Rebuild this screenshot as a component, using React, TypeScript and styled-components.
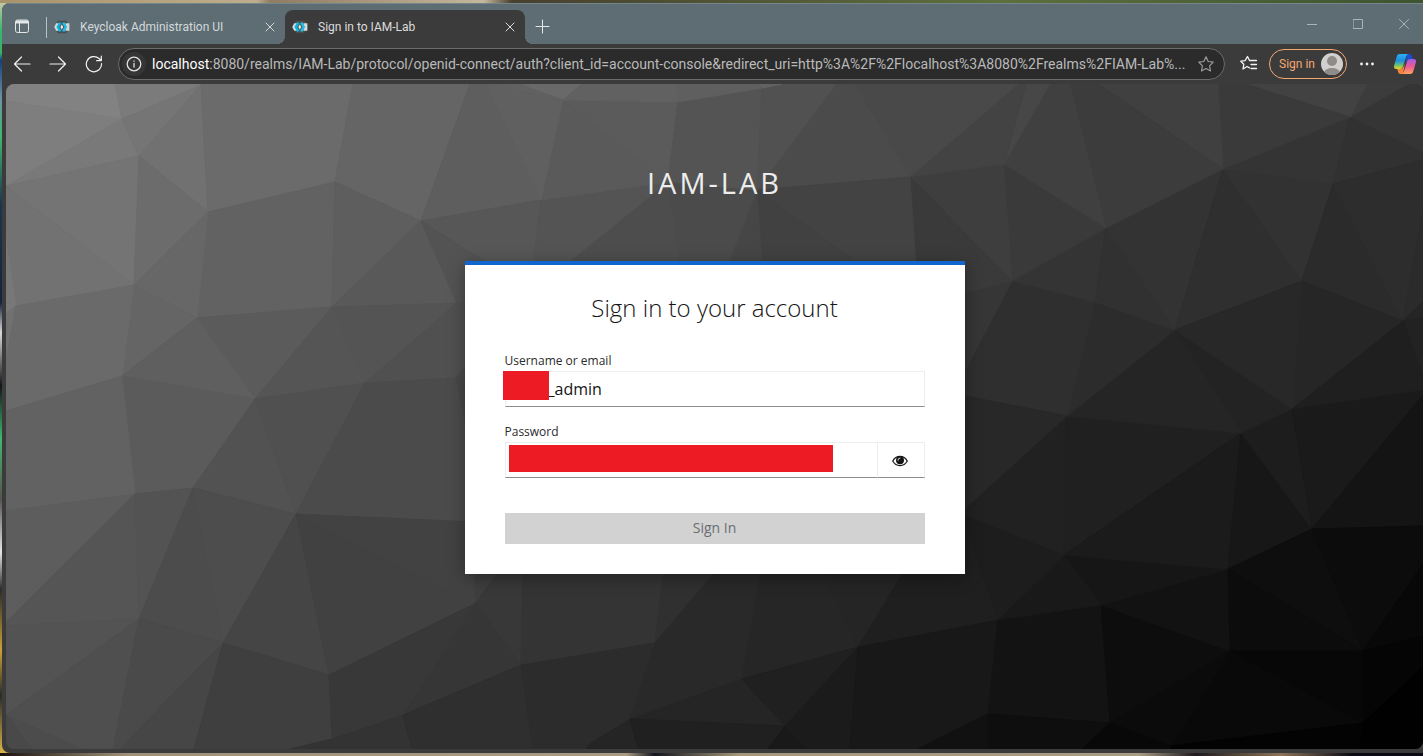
import React from "react";
import styled, { createGlobalStyle, css } from "styled-components";

const uiFont = 'Roboto, "Noto Sans", sans-serif';
const pageFont = '"Open Sans", "Noto Sans", sans-serif';

const GlobalStyle = createGlobalStyle`
  *, *::before, *::after { box-sizing: border-box; }
  html, body, #root { height: 100%; }
  body { margin: 0; overflow: hidden; }
  button { border: 0; padding: 0; background: none; color: inherit; font: inherit; }
`;

const Desktop = styled.div`
  display: flex;
  height: 100%;
  padding: 3px 0 3px 2px;
  background:
    linear-gradient(90deg, #a8926a 0, #bfae8c 18%, #8f7c62 19%, #c5b79b 34%, #47402f 36%, #5d6f3c 70%, #3d5430 100%) top / 100% 3px no-repeat,
    linear-gradient(90deg, #1c120f 0, #a09279 9%, #a89a83 44%, #14161f 46%, #a6977b 52%, #a99c85 80%, #1f1a1f 84%, #8b7358 90%, #0b0a14 95%) bottom / 100% 3px no-repeat,
    linear-gradient(180deg, #d6c8a8 0, #35b86c 4%, #3db167 7%, #14417e 8%, #6b93a6 13%, #3fb86c 18%, #1c3550 27%, #16243d 40%, #d8d8d8 44%, #15151c 51%, #3fb86c 58%, #59534f 66%, #e5e5e5 73%, #2d2c28 78%, #caa233 86%, #2a2a2a 92%, #e3bb47 100%);
`;

const Window = styled.div`
  display: flex;
  flex: 1;
  flex-direction: column;
  min-width: 0;
  overflow: hidden;
  border-radius: 8px 0 0 8px;
  background: #3b3b3b;
  font-family: ${uiFont};
`;

const TabStrip = styled.div`
  display: flex;
  align-items: flex-end;
  height: 41px;
  flex: none;
  border-top: 1px solid #74868c;
  background: #5d6d73;
`;

const StripButton = styled.button<{ $width: number }>`
  display: flex;
  align-items: center;
  justify-content: center;
  width: ${(p) => p.$width}px;
  height: 34px;
  padding-bottom: 2px;
  color: #e4e8e9;
`;

const Divider = styled.span`
  width: 1px;
  height: 21px;
  margin: 0 0 6px 4px;
  background: #b9c1c4;
`;

const Tab = styled.div<{ $active?: boolean }>`
  position: relative;
  display: flex;
  align-items: center;
  gap: 10px;
  width: ${(p) => (p.$active ? 240 : 238)}px;
  height: 34px;
  padding: 0 5px 1px 7px;
  font-size: 12px;
  line-height: 16px;
  color: ${(p) => (p.$active ? "#dcdcdc" : "#d3d9db")};
  ${(p) =>
    p.$active &&
    css`
      border-radius: 8px 8px 0 0;
      background: #3b3b3b;
      &::before,
      &::after {
        content: "";
        position: absolute;
        bottom: 0;
        width: 8px;
        height: 8px;
      }
      &::before {
        left: -8px;
        background: radial-gradient(circle at 0 0, transparent 8px, #3b3b3b 8px);
      }
      &::after {
        right: -8px;
        background: radial-gradient(circle at 100% 0, transparent 8px, #3b3b3b 8px);
      }
    `}
`;

const TabTitle = styled.span`
  flex: 1;
  white-space: nowrap;
`;

const TabClose = styled.button`
  display: flex;
  align-items: center;
  justify-content: center;
  width: 20px;
  height: 20px;
`;

const WindowControls = styled.div`
  display: flex;
  align-self: flex-start;
  margin: 0 -4px 0 auto;
`;

const WindowButton = styled.button`
  display: flex;
  align-items: center;
  justify-content: center;
  width: 46px;
  height: 40px;
  color: #aab4b7;
`;

const Toolbar = styled.div`
  display: flex;
  align-items: center;
  flex: none;
  height: 40px;
  padding-left: 2px;
`;

const ToolButton = styled.button`
  display: flex;
  align-items: center;
  justify-content: center;
  flex: none;
  width: 36px;
  height: 32px;
  color: #f2f2f2;
`;

const SidebarButton = styled(ToolButton)`
  margin-left: 2px;
`;

const AddressBar = styled.div`
  display: flex;
  align-items: center;
  flex: 1;
  min-width: 0;
  height: 32px;
  margin: 0 6px;
  padding: 0 6px 0 3px;
  border: 1px solid #6c6c6c;
  border-radius: 16px;
  background: #2b2b2b;
`;

const SiteInfo = styled.button`
  display: flex;
  align-items: center;
  justify-content: center;
  width: 24px;
  height: 24px;
  border-radius: 12px;
  background: #363636;
  color: #e2e2e2;
`;

const Url = styled.a`
  flex: 1;
  min-width: 0;
  margin: 0 6px;
  overflow: hidden;
  font-size: 14px;
  line-height: 20px;
  white-space: nowrap;
  text-decoration: none;
  color: #b9b9b9;
`;

const UrlHost = styled.span`
  color: #fff;
`;

const StarButton = styled.button`
  display: flex;
  align-items: center;
  justify-content: center;
  width: 24px;
  height: 24px;
  color: #9b9b9b;
`;

const ProfileButton = styled.button`
  display: flex;
  align-items: center;
  justify-content: space-between;
  flex: none;
  width: 78px;
  height: 30px;
  margin: 0 2px;
  padding: 0 3px 0 9px;
  border: 1px solid #f6a770;
  border-radius: 15px;
  font-size: 12px;
  line-height: 16px;
  color: #f6a770;
`;

const Page = styled.main`
  position: relative;
  display: flex;
  flex: 1;
  flex-direction: column;
  align-items: center;
  min-height: 0;
  margin: 0 0 4px 4px;
  padding: 81px 20px 0;
  overflow: hidden;
  border-radius: 8px;
  background: #333;
  font-family: ${pageFont};
`;

const Backdrop = styled.svg`
  position: absolute;
  inset: 0;
  width: 100%;
  height: 100%;
`;

const RealmName = styled.div`
  position: relative;
  margin-bottom: 61px;
  font-size: 29px;
  line-height: 35px;
  letter-spacing: 3px;
  text-transform: uppercase;
  color: #ededed;
`;

const Card = styled.section`
  position: relative;
  width: 100%;
  max-width: 500px;
  padding: 27px 40px 30px;
  border-top: 4px solid #1066cc;
  background: #fff;
  box-shadow: 0 4px 16px rgba(0, 0, 0, 0.35);
`;

const Heading = styled.h1`
  margin: 0 0 28px;
  font-size: 24px;
  font-weight: 300;
  line-height: 32px;
  text-align: center;
  color: #151515;
`;

const Field = styled.div<{ $gap: number }>`
  position: relative;
  margin-bottom: ${(p) => p.$gap}px;
`;

const Label = styled.label`
  display: block;
  margin-bottom: 1px;
  font-size: 12px;
  line-height: 18px;
  color: #2b2b2b;
`;

const InputRow = styled.div`
  display: flex;
`;

const Input = styled.input<{ $indent: number }>`
  flex: 1;
  min-width: 0;
  height: 36px;
  padding: 0 8px 0 ${(p) => p.$indent}px;
  border: 1px solid #ededed;
  border-bottom-color: #8a8d90;
  border-radius: 0;
  outline: 0;
  background: #fff;
  font-family: ${pageFont};
  font-size: 16px;
  color: #151515;
`;

const RevealButton = styled.button`
  display: flex;
  align-items: center;
  justify-content: center;
  width: 47px;
  height: 36px;
  padding: 2px 1px 0 0;
  border: solid #ededed;
  border-width: 1px 1px 1px 0;
  border-bottom-color: #8a8d90;
  color: #151515;
`;

const Redaction = styled.span<{ $x: number; $y: number; $w: number; $h: number }>`
  position: absolute;
  left: ${(p) => p.$x}px;
  top: ${(p) => p.$y}px;
  width: ${(p) => p.$w}px;
  height: ${(p) => p.$h}px;
  background: #ed1c24;
`;

const SubmitButton = styled.button`
  display: block;
  width: 100%;
  height: 31px;
  padding-bottom: 2px;
  background: #d2d2d2;
  font-size: 14px;
  line-height: 20px;
  color: #6a6e73;
`;

type Facet = [points: string, grey: number];

const facets: Facet[] = [
  ["6,84 115,84 122,119 6,101", 130],
  ["115,84 201,84 201,85 122,119", 123],
  ["6,101 122,119 6,186", 126],
  ["122,119 6,186 139,156", 121],
  ["122,119 139,156 201,85", 117],
  ["139,156 201,85 208,212", 113],
  ["6,186 139,156 134,285", 116],
  ["6,186 134,285 16,306 6,240", 114],
  ["6,240 16,306 6,314", 120],
  ["6,314 16,306 6,360", 113],
  ["139,156 208,212 134,285", 108],
  ["201,84 353,84 335,182 208,212", 107],
  ["353,84 470,84 421,221 335,182", 101],
  ["208,212 335,182 332,307 197,318", 98],
  ["208,212 134,285 197,318", 103],
  ["134,285 197,318 122,376", 101],
  ["16,306 134,285 122,376 6,411 6,360", 106],
  ["335,182 421,221 332,307", 94],
  ["421,221 457,303 332,307", 89],
  ["197,318 332,307 255,399", 91],
  ["197,318 122,376 255,399", 95],
  ["332,307 457,303 365,383", 84],
  ["332,307 255,399 365,383", 85],
  ["457,303 365,383 455,378 475,360 475,300", 80],
  ["455,378 475,358 475,386", 74],
  ["455,378 475,386 475,470", 72],
  ["122,376 255,399 193,488 135,494", 91],
  ["122,376 135,494 6,511 6,411", 98],
  ["255,399 193,488 296,514", 82],
  ["255,399 365,383 296,514", 80],
  ["365,383 455,378 475,470 475,522 296,514", 75],
  ["470,84 486,84 541,200 421,221", 94],
  ["421,221 541,200 533,265 490,265", 87],
  ["421,221 490,265 475,300 457,303", 83],
  ["135,494 6,511 6,622", 93],
  ["135,494 139,619 6,626 6,622", 85],
  ["135,494 193,488 139,619", 83],
  ["193,488 139,619 223,643", 76],
  ["193,488 296,514 223,643", 77],
  ["296,514 223,643 329,675", 69],
  ["296,514 329,675 476,603", 65],
  ["296,514 476,603 475,522", 66],
  ["139,619 6,626 6,715", 83],
  ["6,715 139,619 113,749 82,749", 79],
  ["6,715 82,749 32,749", 76],
  ["6,715 32,749 6,749", 73],
  ["139,619 223,643 120,749 113,749", 74],
  ["223,643 194,749 120,749", 70],
  ["223,643 329,675 332,739 290,749 194,749", 63],
  ["329,675 332,739 403,715 476,603", 56],
  ["476,603 403,715 521,665", 54],
  ["332,739 403,715 412,749 290,749", 51],
  ["403,715 521,665 533,749 412,749", 47],
  ["475,560 475,603 497,574 507,560", 62],
  ["476,603 507,560 523,560 521,665", 56],
  ["521,665 523,560 665,560 655,643", 52],
  ["655,643 665,560 725,560", 48],
  ["655,643 725,560 763,560 742,679", 41],
  ["742,679 763,560 815,560 858,647", 38],
  ["858,647 815,560 911,560", 37],
  ["858,647 911,560 960,510 998,620", 31],
  ["521,665 655,643 630,719 588,745 587,749 533,749", 44],
  ["630,719 588,745 587,749 638,749", 37],
  ["655,643 630,719 742,679", 41],
  ["630,719 742,679 785,726", 37],
  ["630,719 785,726 768,749 638,749", 32],
  ["742,679 858,647 785,726", 32],
  ["785,726 858,647 850,749 808,749", 27],
  ["785,726 768,749 808,749", 25],
  ["858,647 998,620 988,714 918,749 850,749", 24],
  ["998,620 988,714 1110,723 1101,605", 19],
  ["988,714 1110,723 1082,749 988,749", 14],
  ["988,714 988,749 918,749", 17],
  ["1101,605 1110,723 1230,651", 13],
  ["1101,605 1230,651 1228,569", 18],
  ["1064,555 1101,605 1228,569", 22],
  ["1064,555 998,620 1101,605", 25],
  ["998,620 1064,555 960,513 960,510", 29],
  ["960,513 1067,416 1064,555", 33],
  ["1067,416 1064,555 1241,433", 32],
  ["1064,555 1241,433 1228,569", 27],
  ["1241,433 1228,569 1312,529", 23],
  ["1241,433 1292,409 1312,529", 29],
  ["1175,330 1292,409 1241,433", 35],
  ["1175,330 1067,416 1241,433", 37],
  ["1292,409 1312,529 1423,395 1423,390", 26],
  ["1312,529 1423,395 1423,526", 20],
  ["1228,569 1312,529 1363,651", 14],
  ["1228,569 1230,651 1363,651", 12],
  ["1312,529 1363,651 1423,564 1423,526", 12],
  ["1363,651 1423,564 1423,636", 8],
  ["1363,651 1363,723 1423,667 1423,636", 5],
  ["1363,723 1423,667 1423,749 1360,749", 1],
  ["1230,651 1363,651 1363,723", 7],
  ["1230,651 1363,723 1171,746", 9],
  ["1230,651 1171,746 1110,723", 11],
  ["1110,723 1171,746 1170,749 1082,749", 8],
  ["1171,746 1363,723 1360,749 1170,749", 3],
  ["1175,330 1095,302 1067,416", 44],
  ["1012,281 1095,302 1067,416 960,395 960,380", 47],
  ["960,395 1067,416 960,513", 40],
  ["1012,281 960,294 960,380", 54],
  ["1012,281 1095,302 1106,228", 52],
  ["1004,164 1106,228 1012,281", 58],
  ["910,177 1004,164 1012,281", 62],
  ["910,177 1012,281 960,294 916,265", 58],
  ["1106,228 1095,302 1175,330", 49],
  ["1106,228 1223,169 1175,330", 51],
  ["1223,169 1175,330 1302,281", 47],
  ["1223,169 1333,184 1302,281", 50],
  ["1223,169 1350,117 1333,184", 52],
  ["1333,184 1350,117 1423,152 1423,160", 49],
  ["1350,117 1408,84 1423,84 1423,152", 53],
  ["1350,117 1367,84 1408,84", 60],
  ["1350,117 1245,84 1367,84", 66],
  ["1223,169 1350,117 1245,84 1218,84", 58],
  ["1223,169 1098,84 1218,84", 64],
  ["1106,228 1223,169 1098,84 1070,84", 60],
  ["1004,164 1106,228 1070,84 1050,84", 64],
  ["1004,164 1026,84 1050,84", 71],
  ["1004,164 1026,84 1018,84 910,177", 67],
  ["910,177 855,84 1018,84", 73],
  ["1333,184 1302,281 1403,321", 43],
  ["1333,184 1403,321 1423,212 1423,160", 45],
  ["1403,321 1423,212 1423,302", 43],
  ["1403,321 1423,302 1423,318", 37],
  ["1403,321 1423,318 1423,377", 34],
  ["1302,281 1403,321 1292,409", 38],
  ["1302,281 1175,330 1292,409", 40],
  ["1403,321 1292,409 1423,390 1423,377", 31],
  ["757,190 910,177 855,84 836,84", 75],
  ["757,190 910,177 916,265 860,265", 67],
  ["757,190 860,265 762,265", 65],
  ["757,190 762,265 728,265", 70],
  ["668,182 757,190 728,265 680,265", 75],
  ["668,182 680,265 565,265", 77],
  ["668,182 541,200 533,265 565,265", 84],
  ["668,182 563,100 541,200", 90],
  ["668,182 678,102 563,100", 91],
  ["678,102 762,88 757,190 668,182", 84],
  ["762,88 757,190 836,84 782,84", 81],
  ["762,88 757,84 782,84", 98],
  ["563,100 519,84 582,84", 105],
  ["563,100 582,84 677,84 678,102", 97],
  ["678,102 677,84 757,84 762,88", 95],
  ["563,100 486,84 519,84", 97],
  ["563,100 486,84 541,200", 96],
];

const LowPolyBackdrop = () => (
  <Backdrop viewBox="6 84 1417 665" preserveAspectRatio="none" aria-hidden="true">
    {facets.map(([points, grey], i) => {
      const fill = `rgb(${grey},${grey},${grey})`;
      return <polygon key={i} points={points} fill={fill} stroke={fill} strokeWidth="1" strokeLinejoin="round" />;
    })}
  </Backdrop>
);

const Line = ({ d, size = 16, width = 1 }: { d: string; size?: number; width?: number }) => (
  <svg
    width={size}
    height={size}
    viewBox={`0 0 ${size} ${size}`}
    fill="none"
    stroke="currentColor"
    strokeWidth={width}
    strokeLinecap="round"
    strokeLinejoin="round"
    aria-hidden="true"
  >
    <path d={d} />
  </svg>
);

const KeycloakIcon = () => (
  <svg width="16" height="16" viewBox="0 0 16 16" aria-hidden="true">
    <path d="M3.800 1.800h8.400l1.800 2.400v7.600l-1.800 2.400H3.800L.8 8z" fill="#4b4d4e" />
    <path d="M2.200 4.200H15.400v7.600H2.200L.2 8z" fill="#d7d9da" />
    <path d="M5 3.500h6.500v9H5z" fill="#55585a" />
    <path d="M6.400 3.600L3.800 8l2.600 4.400" fill="none" stroke="#00b8e3" strokeWidth="2.400" />
    <path d="M9.200 3.600L11.800 8l-2.600 4.400" fill="none" stroke="#19c0e8" strokeWidth="2.400" />
    <path d="M7.800 5.600L6.400 8l1.400 2.400L9.200 8z" fill="#e8eaeb" />
  </svg>
);

const CloseIcon = () => <Line size={10} d="M1 1l8 8M9 1L1 9" />;

const EyeIcon = () => (
  <svg width="16" height="12" viewBox="0 0 16 12" aria-hidden="true">
    <path d="M.7 6C2.4 3 5 1.4 8 1.4S13.600 3 15.300 6C13.600 9 11 10.600 8 10.600S2.400 9 .7 6z" fill="none" stroke="currentColor" strokeWidth="1.200" />
    <circle cx="8" cy="5.200" r="4" fill="currentColor" />
    <path d="M5.900 5.300A2.200 2.200 0 0 1 8 3" fill="none" stroke="#fff" strokeWidth="0.800" strokeLinecap="round" />
  </svg>
);

const CopilotIcon = () => (
  <svg width="24" height="22" viewBox="0 0 24 22" aria-hidden="true">
    <defs>
      <linearGradient id="cpBlue" x1="0" y1="0" x2="0" y2="1">
        <stop offset="0" stopColor="#2bb1f2" />
        <stop offset="0.450" stopColor="#1d8fe0" />
        <stop offset="0.750" stopColor="#6cc36c" />
        <stop offset="1" stopColor="#f0cf20" />
      </linearGradient>
      <linearGradient id="cpPink" x1="0" y1="0" x2="0" y2="1">
        <stop offset="0" stopColor="#a05ae8" />
        <stop offset="0.500" stopColor="#ef5a94" />
        <stop offset="1" stopColor="#ffa25a" />
      </linearGradient>
    </defs>
    <path d="M14 1h2.500c1.300 0 2 .8 2.400 2l.8 3h-3.500c-1.500 0-2.300.8-2.800 2.400L12 12z" fill="#1b4fd0" />
    <path d="M10 21H7.500c-1.300 0-2-.8-2.400-2l-.8-3h3.500c1.500 0 2.300-.8 2.800-2.400L12 10z" fill="#f5853a" />
    <path d="M6.800 1h8.400c-1.200.4-1.800 1.600-2.300 3.200L10 13.500C9.400 15.300 8.500 16 7 16H3.300C1.300 16 .6 14.300 1.100 12.500L3.700 3.700C4.200 2 5.200 1 6.800 1z" fill="url(#cpBlue)" />
    <path d="M17.200 21H8.800c1.200-.4 1.800-1.600 2.300-3.200L14 8.500C14.600 6.700 15.500 6 17 6h3.700c2 0 2.700 1.700 2.200 3.500l-2.600 8.800c-.5 1.700-1.500 2.700-3.100 2.700z" fill="url(#cpPink)" />
  </svg>
);

const AvatarIcon = () => (
  <svg width="22" height="22" viewBox="0 0 22 22" aria-hidden="true">
    <clipPath id="avatarClip">
      <circle cx="11" cy="11" r="11" />
    </clipPath>
    <g clipPath="url(#avatarClip)">
      <rect width="22" height="22" fill="#d2d0ce" />
      <circle cx="11" cy="8" r="5" fill="#8f8b88" />
      <ellipse cx="11" cy="20" rx="8" ry="5" fill="#8f8b88" />
    </g>
  </svg>
);

export default function App() {
  return (
    <>
      <GlobalStyle />
      <Desktop>
        <Window>
          <TabStrip>
            <StripButton $width={40} aria-label="Tab actions">
              <svg width="15" height="15" viewBox="0 0 15 15" fill="none" stroke="currentColor" aria-hidden="true">
                <rect x="0.500" y="1" width="13" height="12.500" rx="2" />
                <path d="M1 3h12" strokeWidth="3" />
                <path d="M4.500 4v9" />
              </svg>
            </StripButton>
            <Divider />
            <Tab>
              <KeycloakIcon />
              <TabTitle>Keycloak Administration UI</TabTitle>
              <TabClose aria-label="Close tab"><CloseIcon /></TabClose>
            </Tab>
            <Tab $active>
              <KeycloakIcon />
              <TabTitle>Sign in to IAM-Lab</TabTitle>
              <TabClose aria-label="Close tab"><CloseIcon /></TabClose>
            </Tab>
            <StripButton $width={35} aria-label="New tab">
              <Line d="M7.500 1v13M1 7.500h13" size={15} />
            </StripButton>
            <WindowControls>
              <WindowButton aria-label="Minimize"><Line size={10} d="M0 5.500h10" /></WindowButton>
              <WindowButton aria-label="Maximize"><Line size={10} d="M.5.5h9v9h-9z" /></WindowButton>
              <WindowButton aria-label="Close"><Line size={10} d="M.5.5l9 9M9.500.5l-9 9" /></WindowButton>
            </WindowControls>
          </TabStrip>
          <Toolbar>
            <ToolButton aria-label="Back"><Line size={18} d="M17 9H1.500M8.500 2L1.500 9l7 7" width={1.2} /></ToolButton>
            <ToolButton aria-label="Forward"><Line size={18} d="M1 9h15.500M9.500 2l7 7-7 7" width={1.2} /></ToolButton>
            <ToolButton aria-label="Refresh"><Line size={18} d="M16.500 8.500A7.600 7.600 0 1 1 14 3.500l2 2M16.300 1v4.700h-4.700" width={1.2} /></ToolButton>
            <AddressBar>
              <SiteInfo aria-label="View site information">
                <Line d="M8 1.200a6.800 6.800 0 1 0 0 13.600a6.800 6.800 0 1 0 0-13.600M8 7.500v3.500M8 5v.2" width={1.3} />
              </SiteInfo>
              <Url href="#">
                <UrlHost>localhost</UrlHost>
                :8080/realms/IAM-Lab/protocol/openid-connect/auth?client_id=account-console&amp;redirect_uri=http%3A%2F%2Flocalhost%3A8080%2Frealms%2FIAM-Lab%...
              </Url>
              <StarButton aria-label="Add to favorites">
                <Line d="M8 .8l2.200 4.700 5 .7-3.600 3.600.9 5.200L8 12.500 3.500 15l.9-5.200L.8 6.200l5-.7z" width={1.2} />
              </StarButton>
            </AddressBar>
            <ToolButton aria-label="Favorites">
              <Line size={18} d="M9.500 12.800L7 11.500 3 14l.8-4.700L.8 6.200l4.300-.6L7.500 1.500l2 4h7M11 9.500h5.500M11 13.500h5.500" width={1.3} />
            </ToolButton>
            <ProfileButton>
              Sign in
              <AvatarIcon />
            </ProfileButton>
            <ToolButton aria-label="Settings and more">
              <svg width="14" height="4" viewBox="0 0 14 4" fill="currentColor" aria-hidden="true">
                <circle cx="1.500" cy="2" r="1.400" />
                <circle cx="7" cy="2" r="1.400" />
                <circle cx="12.500" cy="2" r="1.400" />
              </svg>
            </ToolButton>
            <SidebarButton aria-label="Copilot"><CopilotIcon /></SidebarButton>
          </Toolbar>
          <Page>
            <LowPolyBackdrop />
            <RealmName>IAM-Lab</RealmName>
            <Card>
              <Heading>Sign in to your account</Heading>
              <form onSubmit={(e) => e.preventDefault()}>
                <Field $gap={16}>
                  <Label htmlFor="username">Username or email</Label>
                  <InputRow>
                    <Input id="username" type="text" defaultValue="_admin" $indent={42} />
                  </InputRow>
                  <Redaction $x={-2} $y={19} $w={46} $h={29} />
                </Field>
                <Field $gap={35}>
                  <Label htmlFor="password">Password</Label>
                  <InputRow>
                    <Input id="password" type="password" $indent={8} />
                    <RevealButton type="button" aria-label="Show password"><EyeIcon /></RevealButton>
                  </InputRow>
                  <Redaction $x={4} $y={22} $w={324} $h={27} />
                </Field>
                <SubmitButton type="submit">Sign In</SubmitButton>
              </form>
            </Card>
          </Page>
        </Window>
      </Desktop>
    </>
  );
}
